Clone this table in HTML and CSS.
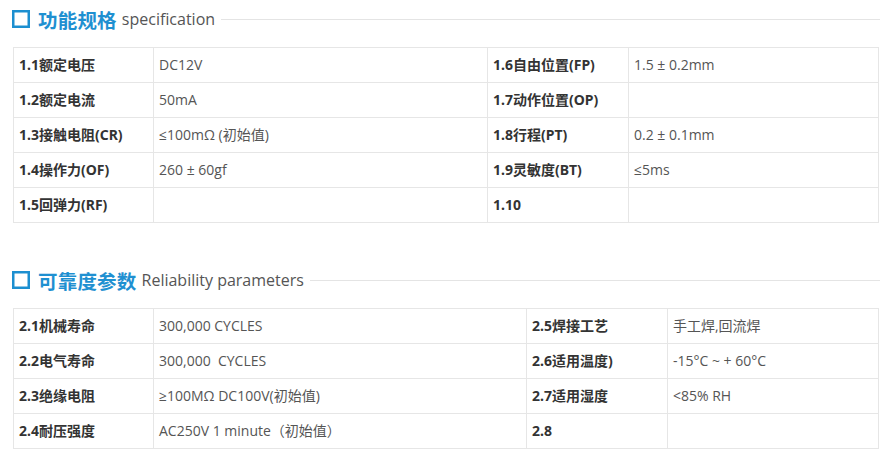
FILE: index.html
```html
<!DOCTYPE html>
<html lang="zh-CN">
<head>
<meta charset="utf-8">
<title>规格参数</title>
<link rel="stylesheet" href="styles.css">
</head>
<body>
<div class="page">
  <section class="block">
    <h2 class="head">
      <svg class="box" width="18" height="18" viewBox="0 0 18 18"><rect x="1.25" y="1.25" width="15.5" height="15.5" fill="none" stroke="#1c8fd0" stroke-width="2.5"/></svg>
      <span class="zh">功能规格</span>
      <span class="en">specification</span>
      <span class="rule"></span>
    </h2>
    <table class="spec t1">
      <colgroup><col class="c1"><col class="c2"><col class="c3"><col class="c4"></colgroup>
      <tr><th>1.1额定电压</th><td>DC12V</td><th>1.6自由位置(FP)</th><td>1.5 ± 0.2mm</td></tr>
      <tr><th>1.2额定电流</th><td>50mA</td><th>1.7动作位置(OP)</th><td></td></tr>
      <tr><th>1.3接触电阻(CR)</th><td>≤100mΩ (初始值)</td><th>1.8行程(PT)</th><td>0.2 ± 0.1mm</td></tr>
      <tr><th>1.4操作力(OF)</th><td>260 ± 60gf</td><th>1.9灵敏度(BT)</th><td>≤5ms</td></tr>
      <tr><th>1.5回弹力(RF)</th><td></td><th>1.10</th><td></td></tr>
    </table>
  </section>
  <section class="block second">
    <h2 class="head">
      <svg class="box" width="18" height="18" viewBox="0 0 18 18"><rect x="1.25" y="1.25" width="15.5" height="15.5" fill="none" stroke="#1c8fd0" stroke-width="2.5"/></svg>
      <span class="zh">可靠度参数</span>
      <span class="en">Reliability parameters</span>
      <span class="rule"></span>
    </h2>
    <table class="spec t2">
      <colgroup><col class="c1"><col class="c2"><col class="c3"><col class="c4"></colgroup>
      <tr><th>2.1机械寿命</th><td>300,000 CYCLES</td><th>2.5焊接工艺</th><td>手工焊,回流焊</td></tr>
      <tr><th>2.2电气寿命</th><td>300,000&nbsp; CYCLES</td><th>2.6适用温度)</th><td>-15°C ~ + 60°C</td></tr>
      <tr><th>2.3绝缘电阻</th><td>≥100MΩ DC100V(初始值)</td><th>2.7适用湿度</th><td>&lt;85% RH</td></tr>
      <tr><th>2.4耐压强度</th><td>AC250V 1 minute（初始值）</td><th>2.8</th><td></td></tr>
    </table>
  </section>
</div>
</body>
</html>
```
FILE: styles.css
```css
html, body {
  margin: 0;
  padding: 0;
  background: #ffffff;
}
body {
  font-family: "Noto Sans", "Noto Sans CJK SC", sans-serif;
  color: #555;
}
.page {
  width: 868px;
  padding-left: 12px;
}
.block.second {
  margin-top: 38px;
}
.head {
  display: flex;
  align-items: center;
  height: 38px;
  margin: 0 0 9px 0;
  font-weight: normal;
}
.box {
  display: block;
  flex: none;
}
.zh {
  margin-left: 8px;
  font-family: "Noto Sans CJK SC", sans-serif;
  font-size: 19.5px;
  font-weight: 700;
  color: #1f90d1;
  letter-spacing: 0.2px;
}
.en {
  margin-left: 5px;
  font-family: "Open Sans", "Noto Sans", sans-serif;
  font-size: 16px;
  color: #555;
}
.rule {
  flex: 1;
  margin-left: 6px;
  border-top: 1px solid #e4e4e4;
  height: 0;
}
.spec {
  margin-left: 1px;
  width: 865px;
  border-collapse: collapse;
  table-layout: fixed;
  font-size: 14px;
}
.spec tr {
  height: 35px;
}
.spec th, .spec td {
  padding: 0 0 0 5px;
  border: 1px solid #e6e6e6;
  text-align: left;
  vertical-align: middle;
  white-space: nowrap;
  line-height: 18px;
}
.spec th {
  font-family: "Noto Sans", "Noto Sans CJK SC", sans-serif;
  font-weight: 700;
  color: #333;
}
.spec td {
  font-family: "Open Sans", "Noto Sans CJK SC", sans-serif;
  font-weight: normal;
  color: #555;
}
.t1 .c1 { width: 140px; }
.t1 .c2 { width: 334px; }
.t1 .c3 { width: 141px; }
.t1 .c4 { width: 250px; }
.t2 .c1 { width: 140px; }
.t2 .c2 { width: 373px; }
.t2 .c3 { width: 141px; }
.t2 .c4 { width: 211px; }
```
